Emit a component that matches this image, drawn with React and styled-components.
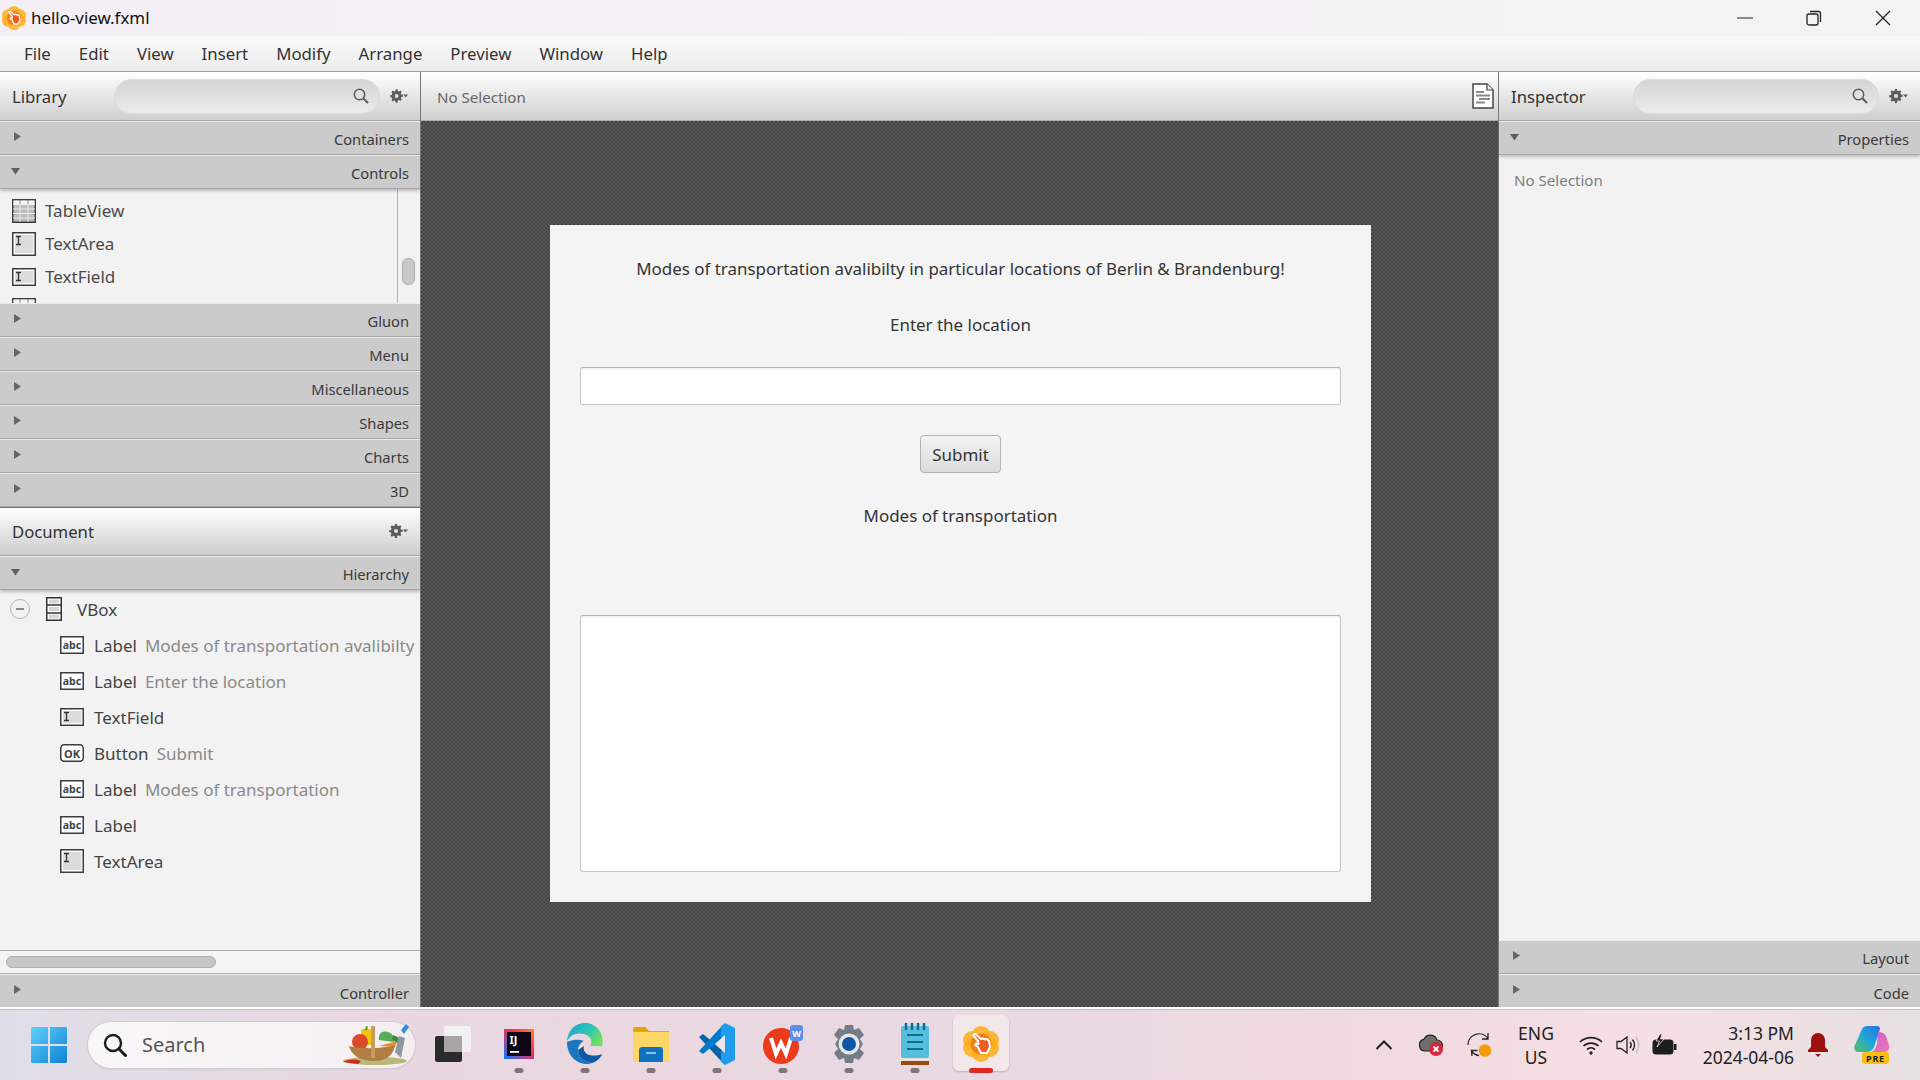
import React from "react"
import styled, { createGlobalStyle } from "styled-components"

const Global = createGlobalStyle`
	html, body { margin: 0; padding: 0; }
	body {
		width: 1920px;
		height: 1080px;
		overflow: hidden;
		font-family: "Noto Sans", "Open Sans", sans-serif;
		background: #f2f2f2;
	}
	* { box-sizing: border-box; }
`

const Page = styled.div`
	width: 1920px;
	height: 1080px;
	display: flex;
	flex-direction: column;
`

/* window chrome */
const TitleBar = styled.div`
	height: 36px;
	flex: none;
	display: flex;
	align-items: center;
	padding-left: 2px;
	background: linear-gradient(90deg, #f4eff6 0%, #f4f0f5 50%, #f3f3f3 80%);
`
const TitleText = styled.span`
	margin-left: 5px;
	padding-bottom: 2px;
	font-size: 16.9px;
	color: #111;
`
const WindowButtons = styled.div`
	margin-left: auto;
	display: flex;
	padding-right: ${p => p.$right || 0}px;
`
const WindowButton = styled.div`
	width: 69px;
	height: 36px;
	display: flex;
	align-items: center;
	justify-content: center;
`
const MenuBar = styled.div`
	height: 36px;
	flex: none;
	display: flex;
	align-items: center;
	gap: 28px;
	padding-left: 24px;
	font-size: 16.8px;
	color: #333;
	background: linear-gradient(#f9f9f9, #ececec);
	border-bottom: 1px solid #9c9c9c;
`

/* panels */
const Workspace = styled.div`
	flex: 1;
	min-height: 0;
	display: flex;
`
const SidePanel = styled.div`
	width: ${p => p.$width}px;
	flex: none;
	display: flex;
	flex-direction: column;
	background: #f2f2f2;
`
const Toolbar = styled.div`
	height: 49px;
	flex: none;
	display: flex;
	align-items: center;
	padding: ${p => p.$padding || "0 12px"};
	background: linear-gradient(#ffffff, #cfcfcf);
	border-bottom: 1px solid #a8a8a8;
`
const ToolbarTitle = styled.span`
	font-size: 16.7px;
	color: #333;
	width: ${p => p.$width}px;
	flex: none;
	padding-top: 1px;
`
const SearchField = styled.div`
	width: ${p => p.$width}px;
	height: 35px;
	flex: none;
	border: 1px solid #dcdcdc;
	border-radius: 18px;
	background: linear-gradient(#d4d4d4, #ececec);
	display: flex;
	align-items: center;
	justify-content: flex-end;
	padding-right: 10px;
	margin-right: 10px;
`
const AccordionHead = styled.div`
	height: ${p => (p.$last ? 33 : 34)}px;
	flex: none;
	display: flex;
	align-items: center;
	justify-content: space-between;
	padding: 0 11px 0 13px;
	font-size: 14.7px;
	color: #3a3a3a;
	background: #cbcbcb;
	border-top: 1px solid #ececec;
	border-bottom: ${p => (p.$last ? "none" : "1px solid #a6a6a6")};
	box-shadow: ${p => (p.$open ? "0 2px 3px rgba(0,0,0,0.22)" : "none")};
	position: relative;
`
const HeadLabel = styled.span`
	line-height: 1;
	padding-top: ${p => (p.$last ? 4 : 2)}px;
`
const TriangleBox = styled.div`
	display: flex;
	margin-bottom: 2px;
`
const ListArea = styled.div`
	height: 114px;
	flex: none;
	display: flex;
	overflow: hidden;
`
const ListColumn = styled.div`
	flex: 1;
	padding: 5px 0 0 12px;
	overflow: hidden;
`
const ListRow = styled.div`
	height: 33px;
	display: flex;
	align-items: center;
	gap: 9px;
	font-size: 17px;
	color: #4a4a4a;
`
const VerticalTrack = styled.div`
	width: 23px;
	flex: none;
	border-left: 1px solid #b5b5b5;
	padding: 69px 0 0 4px;
`
const VerticalThumb = styled.div`
	width: 13px;
	height: 27px;
	border-radius: 6px;
	background: #c9c9c9;
	border: 1px solid #b0b0b0;
`
const DocumentBar = styled(Toolbar)`
	justify-content: space-between;
	padding: 0 12px 1px;
	border-top: 1px solid #777;
	background: linear-gradient(#ffffff, #cdcdcd);
`
const GearLift = styled.div`
	display: flex;
	padding-bottom: 1px;
`
const TreeArea = styled.div`
	flex: 1;
	min-height: 0;
	overflow: hidden;
	padding: 1px 0 0 10px;
`
const TreeRow = styled.div`
	height: 36px;
	display: flex;
	align-items: center;
	white-space: nowrap;
	padding-left: ${p => p.$indent}px;
	font-size: 17px;
	color: #444;
	svg {
		flex: none;
	}
`
const TreeToggle = styled.div`
	width: 20px;
	height: 20px;
	flex: none;
	border: 1.5px solid #b4b4b4;
	border-radius: 50%;
	display: flex;
	align-items: center;
	justify-content: center;
	margin-right: 16px;
	&::after {
		content: "";
		width: 8px;
		height: 2px;
		background: #8a8a8a;
	}
`
const TreeName = styled.span`
	margin-left: ${p => p.$gap}px;
`
const TreeHint = styled.span`
	margin-left: 8px;
	color: #8a8a8a;
`
const HorizontalTrack = styled.div`
	height: 24px;
	flex: none;
	border-top: 1px solid #a8a8a8;
	border-bottom: 1px solid #b0b0b0;
	padding: 5px 0 0 6px;
	background: #f4f4f4;
`
const HorizontalThumb = styled.div`
	width: 210px;
	height: 12px;
	border-radius: 6px;
	background: #c6c6c6;
	border: 1px solid #b0b0b0;
`

/* centre */
const Centre = styled.div`
	flex: 1;
	min-width: 0;
	display: flex;
	flex-direction: column;
	border-left: 1px solid #777;
	border-right: 1px solid #777;
`
const SelectionText = styled.span`
	font-size: 15.1px;
	padding-top: ${p => p.$top || 0}px;
	color: ${p => p.$color || "#666"};
`
const Canvas = styled.div`
	flex: 1;
	min-height: 0;
	display: flex;
	justify-content: center;
	padding: 104px 0 0 2px;
	background-color: #4e4e4e;
	background-image: repeating-conic-gradient(#424242 0 25%, #5a5a5a 0 50%);
	background-size: 4px 4px;
`
const FormCard = styled.div`
	width: 821px;
	height: 677px;
	background: #f4f4f4;
	padding: 0 30px;
	display: flex;
	flex-direction: column;
	align-items: center;
`
const FormLabel = styled.div`
	font-size: 16.95px;
	line-height: 24px;
	color: #333;
	margin-top: ${p => p.$top}px;
	white-space: nowrap;
`
const Input = styled.div`
	width: 100%;
	height: 38px;
	flex: none;
	margin-top: 30px;
	background: linear-gradient(#f2f2f2, #fff 3px);
	border: 1px solid #c6c6c6;
	border-top-color: #b4b4b4;
	border-radius: 3px;
`
const SubmitButton = styled.div`
	width: 81px;
	height: 38px;
	flex: none;
	margin-top: 30px;
	display: flex;
	align-items: center;
	justify-content: center;
	font-size: 17px;
	color: #333;
	border: 1px solid #b2b2b2;
	border-radius: 4px;
	background: linear-gradient(#f3f3f3, #dcdcdc);
`
const TextBox = styled(Input)`
	height: 257px;
	margin-top: 87px;
`

/* inspector */
const InspectorBody = styled.div`
	flex: 1;
	min-height: 0;
	padding: 14px 15px;
`

/* taskbar */
const Taskbar = styled.div`
	height: 73px;
	flex: none;
	display: flex;
	align-items: center;
	padding-left: 31px;
	border-top: 2px solid #fff;
	background: linear-gradient(90deg, #dfdee8 0%, #e8d7e2 20%, #ebd8e0 35%, #e8d9e4 50%, #eed9df 68%, #f5dfe3 85%, #e7e0e2 100%);
	box-shadow: inset 0 1px 0 #c9bcc4;
`
const TaskSearch = styled.div`
	width: 327px;
	height: 46px;
	flex: none;
	margin-left: 21px;
	border-radius: 23px;
	background: linear-gradient(90deg, #f8f7f8, #f5eef1);
	box-shadow: 0 0 0 1px #d2cbd2, 0 1px 2px rgba(0,0,0,0.15);
	display: flex;
	align-items: center;
	padding-left: 15px;
	font-size: 20px;
	color: #555;
`
const SearchWord = styled.span`
	margin-left: 15px;
`
const SearchArt = styled.div`
	margin-left: auto;
	margin-right: 6px;
	display: flex;
`
const TaskIcons = styled.div`
	display: flex;
	margin-left: 5px;
`
const TaskButton = styled.div`
	width: 66px;
	height: 66px;
	display: flex;
	flex-direction: column;
	align-items: center;
	position: relative;
	padding-top: 13px;
`
const ActivePlate = styled.div`
	width: 56px;
	height: 56px;
	border-radius: 6px;
	background: #f3e8e9;
	box-shadow: 0 1px 2px rgba(0,0,0,0.2);
	position: absolute;
	top: 3px;
	left: 5px;
`
const IconSlot = styled.div`
	position: relative;
	height: 38px;
	display: flex;
	align-items: center;
`
const RunDot = styled.div`
	position: absolute;
	bottom: 5px;
	left: 50%;
	transform: translateX(-50%);
	width: ${p => (p.$active ? 24 : 9)}px;
	height: 5px;
	border-radius: 3px;
	background: ${p => (p.$active ? "#e3261f" : "#7e7678")};
`
const Tray = styled.div`
	margin-left: auto;
	display: flex;
	align-items: center;
`
const TrayItem = styled.div`
	width: ${p => p.$width}px;
	flex: none;
	display: flex;
	justify-content: center;
`
const TrayText = styled.div`
	font-size: 17.5px;
	line-height: 24px;
	color: #222;
	text-align: ${p => p.$align};
	width: ${p => p.$width}px;
	flex: none;
	white-space: nowrap;
`

/* drawings */
const Triangle = ({ open }) => (
	<TriangleBox>
		<svg width="10" height="10" viewBox="0 0 10 10" overflow="visible">
			{open ? <path d="M-2 2h9L2.500 8.500z" fill="#5e5e5e" /> : <path d="M1 0l7 4.500L1 9z" fill="#666" />}
		</svg>
	</TriangleBox>
)
const Gear = () => (
	<svg width="19" height="14" viewBox="0 0 19 14">
		<path
			d="M6 0h2l.3 1.800 1.300.5L11 1.200l1.400 1.400-1 1.500.5 1.300 1.800.3v2l-1.800.3-.5 1.300 1 1.500-1.400 1.400-1.500-1-1.200.5L8 14H6l-.3-1.800-1.300-.5-1.500 1L1.500 11.300l1-1.500-.5-1.300L.2 8.200v-2l1.800-.3.5-1.300-1-1.500L2.900 1.200l1.500 1 1.300-.5z"
			fill="#5c5c5c"
		/>
		<circle cx="7" cy="7" r="2" fill="#e2e2e2" />
		<path d="M14 5.500h5l-2.500 3z" fill="#5c5c5c" />
	</svg>
)
const Loupe = () => (
	<svg width="16" height="16" viewBox="0 0 16 16" fill="none" stroke="#5c5c5c">
		<circle cx="6.500" cy="6.500" r="5.200" strokeWidth="1.500" />
		<path d="M10.500 10.500L15 15" strokeWidth="2" />
	</svg>
)
const TableGlyph = () => (
	<svg width="24" height="24" viewBox="0 0 24 24">
		<rect x=".75" y=".75" width="22.500" height="22.500" fill="#bcbcbc" stroke="#3c3c3c" strokeWidth="1.500" />
		<rect x="1.500" y="1.500" width="21" height="3.500" fill="#f5f5f5" />
		<path d="M1 5.500h22M1 10h22M1 14.500h22M1 19h22M8 5v18M16 5v18" stroke="#f0f0f0" strokeWidth=".9" />
		<path d="M8 1v4M16 1v4" stroke="#777" strokeWidth=".9" />
	</svg>
)
const CursorGlyph = ({ height }) => (
	<svg width="24" height={height} viewBox={`0 0 24 ${height}`}>
		<rect x=".75" y=".75" width="22.500" height={height - 1.5} fill="#fff" stroke="#3c3c3c" strokeWidth="1.500" />
		<rect x="3" y="3" width="18.500" height={height - 6} fill="#dcdcdc" />
		<path d="M4 4.500h5M6.500 4.500v8M4 12.500h5" stroke="#333" strokeWidth="1.300" fill="none" />
	</svg>
)
const LabelGlyph = () => (
	<svg width="24" height="18" viewBox="0 0 24 18">
		<rect x=".75" y=".75" width="22.500" height="16.500" fill="#fff" stroke="#3c3c3c" strokeWidth="1.500" />
		<text x="12" y="13" fontSize="10.500" fontWeight="700" fontFamily="Noto Sans" textAnchor="middle" fill="#444">abc</text>
	</svg>
)
const OkGlyph = () => (
	<svg width="24" height="18" viewBox="0 0 24 18">
		<rect x=".75" y=".75" width="22.500" height="16.500" rx="3.500" fill="#fff" stroke="#3c3c3c" strokeWidth="1.500" />
		<text x="12" y="13.500" fontSize="11" fontWeight="700" fontFamily="Noto Sans" textAnchor="middle" fill="#444">OK</text>
	</svg>
)
const VBoxGlyph = () => (
	<svg width="16" height="24" viewBox="0 0 16 24">
		<rect x=".75" y=".75" width="14.500" height="22.500" fill="#fff" stroke="#333" strokeWidth="1.500" />
		<path d="M1 8h14M1 16h14" stroke="#333" strokeWidth="1.500" />
		<path d="M3 4.500h10M3 12h10M3 19.500h10" stroke="#d6d6d6" strokeWidth="4" />
	</svg>
)
const PageGlyph = () => (
	<svg width="22" height="26" viewBox="0 0 22 26">
		<path d="M1 1h14l6 6v18H1z" fill="#fff" stroke="#444" strokeWidth="1.500" />
		<path d="M15 1v6h6" fill="#eee" stroke="#444" strokeWidth="1.200" />
		<path d="M4 9h8M4 12.500h14M7 16h11M4 19.500h9" stroke="#8a8a8a" strokeWidth="1.800" />
	</svg>
)
const BuilderLogo = ({ size }) => (
	<svg width={size} height={size} viewBox="0 0 36 36">
		<g fill="#fbae17" fillOpacity=".85">
			<circle cx="18" cy="9.500" r="9.500" />
			<circle cx="18" cy="26.500" r="9.500" />
			<circle cx="9" cy="14" r="9" />
			<circle cx="27" cy="14" r="9" />
			<circle cx="9" cy="22" r="9" />
			<circle cx="27" cy="22" r="9" />
		</g>
		<circle cx="18" cy="18" r="10.500" fill="#f47d20" />
		<path
			d="M10 9L12.500 8L18 13L20 12.500L22 13.500L24 13L26 15L27 21L24 27L18 27L15 21L12 19L13.500 17.500L15.500 18L15 15z"
			fill="#ee5a1f"
			stroke="#fff"
			strokeWidth="2"
			strokeLinejoin="round"
		/>
	</svg>
)
const WindowsLogo = () => (
	<svg width="36" height="36" viewBox="0 0 36 36">
		<defs>
			<linearGradient id="winA" x1="0" y1="0" x2="1" y2="1">
				<stop offset="0" stopColor="#5fd2f9" />
				<stop offset="1" stopColor="#0f80d7" />
			</linearGradient>
		</defs>
		<path d="M1.500 0H17v17H0V1.500A1.500 1.500 0 0 1 1.500 0zM19 0h15.500A1.500 1.500 0 0 1 36 1.500V17H19zM0 19h17v17H1.500A1.500 1.500 0 0 1 0 34.500zM19 19h17v15.500a1.500 1.500 0 0 1-1.500 1.500H19z" fill="url(#winA)" />
	</svg>
)
const TaskLoupe = () => (
	<svg width="24" height="24" viewBox="0 0 24 24" fill="none" stroke="#1c1c1c">
		<circle cx="10" cy="10" r="8" strokeWidth="2.400" />
		<path d="M16 16l6.500 6.500" strokeWidth="3" strokeLinecap="round" />
	</svg>
)
const Basket = () => (
	<svg width="68" height="42" viewBox="0 0 68 42">
		<ellipse cx="34" cy="37" rx="32" ry="4" fill="#b9b779" />
		<path d="M2 38c6-3 12-3 18-1l-3 3z" fill="#cf2a1f" />
		<path d="M20 6c3-2 9-2 11 1l-1 14H20z" fill="#f4c40f" />
		<path d="M24 6l1-4 2 .5-1 4z" fill="#5f9a2d" />
		<circle cx="19" cy="18" r="8" fill="#dd4a2b" />
		<path d="M38 16c-1-5 2-10 9-8 5 2 7 6 6 10z" fill="#55ad58" />
		<path d="M38 22l18-5-2 6z" fill="#f08a24" />
		<path d="M52 11l5 2 2 4-3 2-5-4z" fill="#3d8a3e" />
		<path d="M8 22c10 3 34 3 46-1-1 9-8 16-21 16S10 31 8 22z" fill="#b27d43" />
		<path d="M30 2h4v32h-4z" fill="#c99b63" />
		<path d="M60 6l5-6 3 3-5 7z" fill="#2f8fdb" />
		<path d="M58 12l6 2-4 20-6-6z" fill="#8f989e" />
	</svg>
)
const TaskViewIcon = () => (
	<svg width="36" height="36" viewBox="0 0 36 36">
		<rect x="0" y="10" width="27" height="26" rx="2" fill="#2b2b2b" />
		<rect x="9" y="0" width="27" height="26" rx="2" fill="#f4f1f2" />
		<rect x="9" y="10" width="18" height="16" fill="#a8a5a6" />
	</svg>
)
const IntellijIcon = () => (
	<svg width="30" height="30" viewBox="0 0 30 30">
		<defs>
			<linearGradient id="ijA" x1="0" y1="1" x2="1" y2="0">
				<stop offset="0" stopColor="#087cfa" />
				<stop offset=".6" stopColor="#fe2857" />
				<stop offset="1" stopColor="#fe8a1f" />
			</linearGradient>
		</defs>
		<rect width="30" height="30" fill="url(#ijA)" />
		<rect x="3" y="3" width="24" height="24" fill="#0c0513" />
		<text x="5.500" y="15" fontSize="11" fontWeight="700" fontFamily="Noto Sans" fill="#fff">IJ</text>
		<rect x="6" y="22" width="9" height="1.800" fill="#fff" />
	</svg>
)
const EdgeIcon = () => (
	<svg width="36" height="42" viewBox="0 0 36 42">
		<defs>
			<linearGradient id="edgeA" x1="0" y1="0" x2="1" y2=".6">
				<stop offset="0" stopColor="#1f9fd8" />
				<stop offset=".6" stopColor="#30c5b3" />
				<stop offset="1" stopColor="#6ee060" />
			</linearGradient>
		</defs>
		<path d="M18 0C8 0 0 8 0 19c2-7 10-10 17-8 7 2 9 8 6 12h12C38 10 29 0 18 0z" fill="url(#edgeA)" />
		<path d="M0 19c0 12 8 22 20 22 2 0 4-.5 5-1-8-1-14-6-14-13 0-4 3-8 6-9-7-3-15 0-17 1z" fill="#1a78c2" />
		<path d="M11 27c0 7 6 12 14 13 6-2 9-6 10-9-5 2-11 2-15 0-3-2-4-5-3-8z" fill="#0c59a4" />
	</svg>
)
const FolderIcon = () => (
	<svg width="36" height="36" viewBox="0 0 36 36">
		<path d="M0 3a2 2 0 0 1 2-2h10l4 4h20v6H0z" fill="#e2a60d" />
		<path d="M0 6h36v30H0z" fill="#fdd766" />
		<path d="M6 36V24a3 3 0 0 1 3-3h18a3 3 0 0 1 3 3v12z" fill="#0f72c0" />
		<path d="M13 27h10" stroke="#7fc3ee" strokeWidth="2" />
	</svg>
)
const VscodeIcon = () => (
	<svg width="36" height="42" viewBox="0 0 36 42">
		<path d="M0 14l4-3 23 19-5 8z" fill="#0065a9" />
		<path d="M0 28l4 3L27 12l-5-8z" fill="#007acc" />
		<path d="M26 0l10 5v32l-10 5-4-3V3z" fill="#1f9cf0" />
		<path d="M26 12v18l-10-9z" fill="#f2e3e8" />
	</svg>
)
const WpsIcon = () => (
	<svg width="40" height="44" viewBox="0 0 40 44">
		<circle cx="18" cy="24" r="18" fill="#ec3a1a" />
		<path d="M8 16l5 16 5-11 5 11 5-16" fill="none" stroke="#fff" strokeWidth="4" strokeLinejoin="miter" />
		<rect x="27" y="3" width="13" height="16" rx="3" fill="#5d8fea" />
		<text x="33.500" y="15" fontSize="9" fontWeight="700" fontFamily="Noto Sans" textAnchor="middle" fill="#fff">W</text>
	</svg>
)
const SettingsIcon = () => (
	<svg width="36" height="38" viewBox="0 0 36 38">
		<path d="M14 0h8l1 5 5-2 5 7-4 4 3 5-3 5 4 4-5 7-5-2-1 5h-8l-1-5-5 2-5-7 4-4-3-5 3-5-4-4 5-7 5 2z" fill="#737d86" />
		<circle cx="18" cy="19" r="10.500" fill="#e6e6e6" />
		<circle cx="18" cy="19" r="7" fill="#0f57a6" />
	</svg>
)
const NotepadIcon = () => (
	<svg width="28" height="42" viewBox="0 0 28 42">
		<rect x="0" y="3" width="28" height="32" rx="2" fill="#56bddc" />
		<path d="M5 0v6M11 0v6M17 0v6M23 0v6" stroke="#0d6e8f" strokeWidth="2.500" strokeLinecap="round" />
		<path d="M6 12h16M6 19h16M6 26h16" stroke="#0d6e8f" strokeWidth="2" />
		<rect x="0" y="35" width="28" height="3" fill="#e8e2dc" />
		<rect x="0" y="38" width="28" height="4" fill="#9a4a13" />
	</svg>
)
const Chevron = () => (
	<svg width="18" height="12" viewBox="0 0 18 12" fill="none" stroke="#222" strokeWidth="2">
		<path d="M1.500 10L9 2.500 16.500 10" />
	</svg>
)
const CloudError = () => (
	<svg width="26" height="24" viewBox="0 0 26 24">
		<path d="M6 18a6 6 0 0 1-1-11.800A7 7 0 0 1 18 7a5 5 0 0 1 0 11z" fill="#6e6e6e" stroke="#222" strokeWidth="1.200" />
		<circle cx="17" cy="16" r="7" fill="#d9263c" />
		<path d="M14.500 13.500l5 5M19.500 13.500l-5 5" stroke="#fff" strokeWidth="1.800" />
	</svg>
)
const SyncDot = () => (
	<svg width="26" height="28" viewBox="0 0 26 28">
		<g fill="none" stroke="#222" strokeWidth="1.300">
			<path d="M1 14A11 11 0 0 1 21 7.500M21 2v6h-6" />
			<path d="M5 25l-.5-5.500h6M4.500 20A11 11 0 0 0 12 24.500" />
		</g>
		<circle cx="18" cy="19.500" r="6.300" fill="#f59c0d" />
	</svg>
)
const Wifi = () => (
	<svg width="24" height="20" viewBox="0 0 24 20" fill="none" stroke="#222" strokeWidth="1.700">
		<path d="M1 7a16 16 0 0 1 22 0M4.500 11a11 11 0 0 1 15 0M8 14.500a6 6 0 0 1 8 0" />
		<circle cx="12" cy="18" r="1.700" fill="#222" stroke="none" />
	</svg>
)
const Speaker = () => (
	<svg width="24" height="22" viewBox="0 0 24 22" fill="none" stroke="#222" strokeWidth="1.300">
		<path d="M1 7.500h4L11 3v16l-6-4.500H1z" />
		<path d="M14 8a5 5 0 0 1 0 6M16.500 5.500a9 9 0 0 1 0 11" strokeWidth="1.500" />
		<path d="M20 3a13 13 0 0 1 0 16" stroke="#bbb" />
	</svg>
)
const Battery = () => (
	<svg width="25" height="22" viewBox="0 0 25 22">
		<rect x="1" y="6" width="20" height="14" rx="2.500" fill="#1d1d1d" stroke="#1d1d1d" />
		<rect x="22" y="10" width="2.500" height="6" fill="#1d1d1d" />
		<path d="M8 0L4 7h3.500L5 13l7-8H8.500L10 0z" fill="#1d1d1d" stroke="#f3dfe3" strokeWidth=".8" />
	</svg>
)
const Bell = () => (
	<svg width="22" height="26" viewBox="0 0 22 26">
		<path d="M11 1a7 7 0 0 1 7 7v7l3 3v2H1v-2l3-3V8a7 7 0 0 1 7-7z" fill="#9e1010" />
		<path d="M8 22h6l-3 3z" fill="#9e1010" />
	</svg>
)
const Copilot = () => (
	<svg width="36" height="38" viewBox="0 0 36 38">
		<defs>
			<linearGradient id="copA" x1="0" y1="1" x2="1" y2="0">
				<stop offset="0" stopColor="#5cc05a" />
				<stop offset=".5" stopColor="#1fa6d8" />
				<stop offset="1" stopColor="#2a6fe0" />
			</linearGradient>
			<linearGradient id="copB" x1="0" y1="0" x2="1" y2="1">
				<stop offset="0" stopColor="#c35fd6" />
				<stop offset="1" stopColor="#f17ab0" />
			</linearGradient>
		</defs>
		<path d="M8 3c1-2 3-3 5-3h10c2 0 3 1 3 3l-5 15c-1 4-3 8-8 8H4C1 26-1 23 1 19z" fill="url(#copA)" />
		<path d="M24 6c4 0 6 1 8 4l3 9c1 4-1 7-5 7H18c3-2 4-5 5-8z" fill="url(#copB)" />
		<rect x="8" y="26" width="27" height="12" rx="3" fill="#fbbf14" />
		<text x="21.500" y="35.500" fontSize="9" fontWeight="700" letterSpacing=".8" fontFamily="Noto Sans" textAnchor="middle" fill="#222">PRE</text>
	</svg>
)

const Accordion = ({ label, open, last }) => (
	<AccordionHead $open={open} $last={last}>
		<Triangle open={open} />
		<HeadLabel $last={last}>{label}</HeadLabel>
	</AccordionHead>
)

const treeRows = [
	{ glyph: <LabelGlyph />, name: "Label", hint: "Modes of transportation avalibilty in particular locations of Berlin & Brandenburg!" },
	{ glyph: <LabelGlyph />, name: "Label", hint: "Enter the location" },
	{ glyph: <CursorGlyph height={18} />, name: "TextField" },
	{ glyph: <OkGlyph />, name: "Button", hint: "Submit" },
	{ glyph: <LabelGlyph />, name: "Label", hint: "Modes of transportation" },
	{ glyph: <LabelGlyph />, name: "Label" },
	{ glyph: <CursorGlyph height={24} />, name: "TextArea" }
]

const taskApps = [
	{ icon: <TaskViewIcon /> },
	{ icon: <IntellijIcon />, running: true },
	{ icon: <EdgeIcon />, running: true },
	{ icon: <FolderIcon />, running: true },
	{ icon: <VscodeIcon />, running: true },
	{ icon: <WpsIcon />, running: true },
	{ icon: <SettingsIcon />, running: true },
	{ icon: <NotepadIcon />, running: true },
	{ icon: <BuilderLogo size={36} />, active: true }
]

const App = () => {
	return (
		<Page>
			<Global />
			<TitleBar>
				<BuilderLogo size={24} />
				<TitleText>hello-view.fxml</TitleText>
				<WindowButtons $right={3}>
					<WindowButton>
						<svg width="16" height="2" viewBox="0 0 16 2"><path d="M0 1h16" stroke="#222" strokeWidth="1" /></svg>
					</WindowButton>
					<WindowButton>
						<svg width="16" height="16" viewBox="0 0 16 16" fill="none" stroke="#222" strokeWidth="1.300">
							<rect x="1" y="4" width="11" height="11" rx="2" />
							<path d="M4 1.500h8.500a2 2 0 0 1 2 2V12" />
						</svg>
					</WindowButton>
					<WindowButton>
						<svg width="16" height="16" viewBox="0 0 16 16" stroke="#222" strokeWidth="1.300"><path d="M1 1l14 14M15 1L1 15" /></svg>
					</WindowButton>
				</WindowButtons>
			</TitleBar>
			<MenuBar>
				{["File", "Edit", "View", "Insert", "Modify", "Arrange", "Preview", "Window", "Help"].map(m => (
					<span key={m}>{m}</span>
				))}
			</MenuBar>
			<Workspace>
				<SidePanel $width={420}>
					<Toolbar>
						<ToolbarTitle $width={102}>Library</ToolbarTitle>
						<SearchField $width={266}><Loupe /></SearchField>
						<Gear />
					</Toolbar>
					<Accordion label="Containers" />
					<Accordion label="Controls" open />
					<ListArea>
						<ListColumn>
							<ListRow><TableGlyph /><span>TableView</span></ListRow>
							<ListRow><CursorGlyph height={24} /><span>TextArea</span></ListRow>
							<ListRow><CursorGlyph height={18} /><span>TextField</span></ListRow>
							<ListRow><TableGlyph /></ListRow>
						</ListColumn>
						<VerticalTrack><VerticalThumb /></VerticalTrack>
					</ListArea>
					{["Gluon", "Menu", "Miscellaneous", "Shapes", "Charts", "3D"].map(l => (
						<Accordion key={l} label={l} />
					))}
					<DocumentBar>
						<ToolbarTitle>Document</ToolbarTitle>
						<GearLift><Gear /></GearLift>
					</DocumentBar>
					<Accordion label="Hierarchy" open />
					<TreeArea>
						<TreeRow>
							<TreeToggle />
							<VBoxGlyph />
							<TreeName $gap={15}>VBox</TreeName>
						</TreeRow>
						{treeRows.map((r, i) => (
							<TreeRow key={i} $indent={50}>
								{r.glyph}
								<TreeName $gap={10}>{r.name}</TreeName>
								{r.hint && <TreeHint>{r.hint}</TreeHint>}
							</TreeRow>
						))}
					</TreeArea>
					<HorizontalTrack><HorizontalThumb /></HorizontalTrack>
					<Accordion label="Controller" last />
				</SidePanel>
				<Centre>
					<Toolbar $padding="0 4px 0 16px">
						<SelectionText $top={2}>No Selection</SelectionText>
						<WindowButtons><PageGlyph /></WindowButtons>
					</Toolbar>
					<Canvas>
						<FormCard>
							<FormLabel $top={32}>Modes of transportation avalibilty in particular locations of Berlin &amp; Brandenburg!</FormLabel>
							<FormLabel $top={32}>Enter the location</FormLabel>
							<Input />
							<SubmitButton>Submit</SubmitButton>
							<FormLabel $top={31}>Modes of transportation</FormLabel>
							<TextBox />
						</FormCard>
					</Canvas>
				</Centre>
				<SidePanel $width={421}>
					<Toolbar>
						<ToolbarTitle $width={122}>Inspector</ToolbarTitle>
						<SearchField $width={246}><Loupe /></SearchField>
						<Gear />
					</Toolbar>
					<Accordion label="Properties" open />
					<InspectorBody><SelectionText $color="#7d7d7d">No Selection</SelectionText></InspectorBody>
					<Accordion label="Layout" />
					<Accordion label="Code" last />
				</SidePanel>
			</Workspace>
			<Taskbar>
				<WindowsLogo />
				<TaskSearch>
					<TaskLoupe />
					<SearchWord>Search</SearchWord>
					<SearchArt><Basket /></SearchArt>
				</TaskSearch>
				<TaskIcons>
					{taskApps.map((a, i) => (
						<TaskButton key={i}>
							{a.active && <ActivePlate />}
							<IconSlot>{a.icon}</IconSlot>
							{(a.running || a.active) && <RunDot $active={a.active} />}
						</TaskButton>
					))}
				</TaskIcons>
				<Tray>
					<TrayItem $width={48}><Chevron /></TrayItem>
					<TrayItem $width={48}><CloudError /></TrayItem>
					<TrayItem $width={48}><SyncDot /></TrayItem>
					<TrayText $width={64} $align="center">ENG<br />US</TrayText>
					<TrayItem $width={46}><Wifi /></TrayItem>
					<TrayItem $width={28}><Speaker /></TrayItem>
					<TrayItem $width={44}><Battery /></TrayItem>
					<TrayText $width={108} $align="right">3:13 PM<br />2024-04-06</TrayText>
					<TrayItem $width={48}><Bell /></TrayItem>
					<TrayItem $width={60}><Copilot /></TrayItem>
					<TrayItem $width={18} />
				</Tray>
			</Taskbar>
		</Page>
	)
}

export default App
